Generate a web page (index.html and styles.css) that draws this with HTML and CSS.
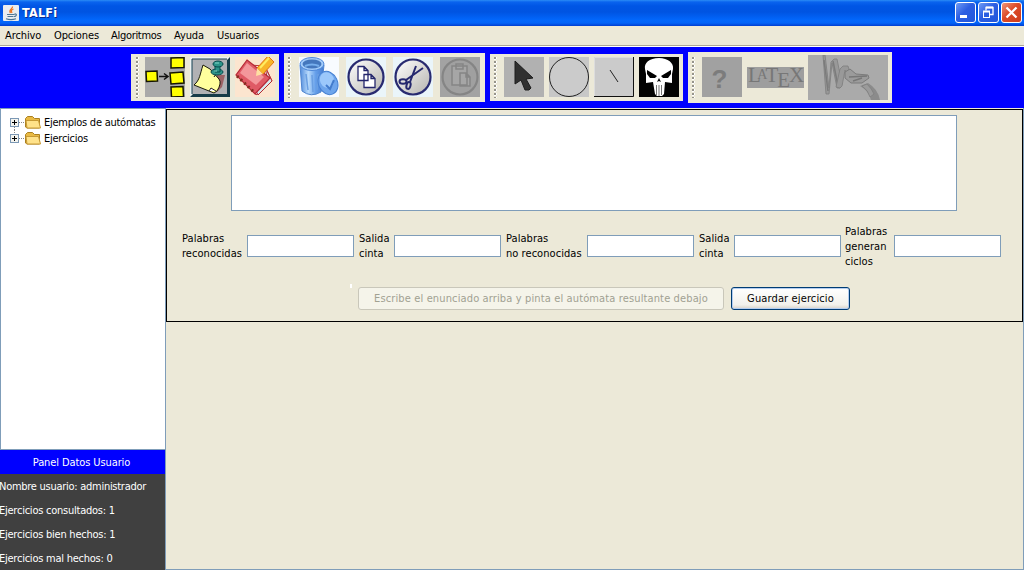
FILE: index.html
```html
<!DOCTYPE html>
<html lang="es">
<head>
<meta charset="utf-8">
<title>TALFi</title>
<link rel="stylesheet" href="styles.css">
</head>
<body>
<header class="titlebar">
  <svg class="app-icon" width="16" height="16" viewBox="0 0 16 16"><rect width="16" height="16" rx="1" fill="#e9edf0"/><path d="M9.5 1.500C10 4 5 4.500 7.500 8M10.500 4C8 5 8 6 9 8" fill="none" stroke="#ec7623" stroke-width="1.300"/><path d="M4 9.500h7.500M4.500 11.500h6M3 13.800c3 1 7 1 10 0M11.500 9c3-.5 2 2.500-.5 2.500" fill="none" stroke="#4d7695" stroke-width="1.200"/></svg>
  <h1 class="title">TALFi</h1>
  <div class="window-buttons">
    <span class="winbtn"><svg width="21" height="21"><rect x="5" y="13" width="7" height="3" fill="#fff"/></svg></span>
    <span class="winbtn"><svg width="21" height="21" fill="none" stroke="#fff"><path d="M8 8.500V5.500h7v7h-3" stroke-width="1.300"/><path d="M8 5.500h7" stroke-width="2"/><rect x="5.500" y="9.500" width="6" height="6"/><path d="M5 9.500h7" stroke-width="2"/></svg></span>
    <span class="winbtn winbtn-close"><svg width="21" height="21"><path d="M5.500 5.500l10 10M15.500 5.500l-10 10" stroke="#fff" stroke-width="2.300"/></svg></span>
  </div>
</header>
<nav class="menubar"><span class="m1">Archivo</span><span class="m2">Opciones</span><span class="m3">Algoritmos</span><span class="m4">Ayuda</span><span class="m5">Usuarios</span></nav>

<div class="toolbars">
  <div class="toolbar tb-files"><i class="grip"></i>
    <svg width="40" height="40" viewBox="0 0 40 40"><rect width="40" height="40" fill="#a9a9a9"/><g fill="#ff0" stroke="#151500" stroke-width="1.500"><path d="M1 14.500l11-.5.500 10-11 .5zM26 1l13-.5v10l-13 .5zM25 16l13-1 1 11-13 1zM26 30l12-.5.500 10-12 .5z"/></g><path d="M14 19.500h9M19 16.500l4 3-4 3" fill="none" stroke="#111" stroke-width="1.500"/></svg>
    <svg width="40" height="40" viewBox="0 0 40 40"><rect width="40" height="40" fill="#163b48"/><path d="M0 40V0h40l-3 3H3v34z" fill="#eef3f3"/><rect x="2" y="2" width="35" height="35" fill="#b1b1b4"/><path d="M2 37V2h35" fill="none" stroke="#174052"/><path d="M27 18l8 0-3 12-5 5z" fill="#9c6265"/><path d="M13 8l7 4 9 10q3 4-2 12l-3 2L4 28c6-5 6-11 9-20z" fill="#ffff9d" stroke="#19190c"/><path d="M19 34l2-3 5 3" fill="#fff" stroke="#222"/><path d="M24 20l4-6" stroke="#111"/><g fill="#2d9388" stroke="#064a4c"><ellipse cx="27" cy="15" rx="6" ry="3"/><path d="M25 8h5v7h-5z"/><ellipse cx="28" cy="7" rx="5" ry="3"/></g><path d="M25 6h4M24 14h3" stroke="#83d5c9"/></svg>
    <svg width="40" height="40" viewBox="0 0 40 40"><rect width="40" height="40" fill="#fce5cf"/><path d="M14 8L30 9l7 15-16 14-7-17z" fill="#fff1ec" stroke="#ba3536"/><path d="M30 10l7 14-14 14-3-6 12-12z" fill="#d7e9ee" stroke="#b42830"/><path d="M12 3l23 18-15 16L1 18z" fill="#df5a65" stroke="#b52836" stroke-width="1.200"/><path d="M12 6l17 14-8 8L5 16z" fill="#f3979b"/><path d="M2 19l18 17" stroke="#852e21" stroke-width="3" stroke-dasharray="2 3"/><path d="M33-1l6 6-11 12-6-6z" fill="#f8b529" stroke="#df7810"/><path d="M22 11l6 6-7 2z" fill="#ffdfa2"/><path d="M34 1l-9 10" stroke="#ffec60" stroke-width="2"/></svg>
  </div>
  <div class="toolbar tb-edit"><i class="grip"></i>
    <svg width="40" height="40" viewBox="0 0 40 40"><defs><linearGradient id="bin"><stop stop-color="#508bdc"/><stop offset=".35" stop-color="#b8dafb"/><stop offset=".65" stop-color="#659fea"/><stop offset="1" stop-color="#457bd0"/></linearGradient></defs><rect width="40" height="40" fill="#f8fbff"/><path d="M1 8l2 26q9 7 19 1l3-27z" fill="url(#bin)" stroke="#4f85cf"/><path d="M7 17l2 16M13 18l1 17M19 17l-1 16" stroke="#6a9fe2" stroke-width="1.500"/><ellipse cx="13" cy="7" rx="12" ry="6.500" fill="#a3ccfa" stroke="#4d87d8"/><ellipse cx="13" cy="7" rx="9.500" ry="4.500" fill="#4477bd"/><path d="M6 9q7-3 14 0" fill="none" stroke="#78b0ed" stroke-width="2"/><ellipse cx="29" cy="26" rx="9.500" ry="12" transform="rotate(-25 29 26)" fill="#6ea5ec" stroke="#4680d2"/><ellipse cx="28" cy="23" rx="7" ry="8" transform="rotate(-25 28 23)" fill="#9cc8fb"/><path d="M27 28l4 4 4-9" fill="none" stroke="#437ccd" stroke-width="2"/></svg>
    <svg width="40" height="40" viewBox="0 0 40 40"><defs><linearGradient id="disc" x2="1" y2="1"><stop stop-color="#fff"/><stop offset="1" stop-color="#b5b3ae"/></linearGradient></defs><rect width="40" height="40" fill="#eaf5fa"/><circle cx="20" cy="20" r="17.500" fill="url(#disc)" stroke="#282a70" stroke-width="2.200"/><g fill="#fff" stroke="#24266c" stroke-width="1.300"><path d="M12 9.500h6l4 4v10H12zM18 9.500v4h4M18 17.500h7l4 4v9H18zM25 17.500v4h4"/></g></svg>
    <svg width="40" height="40" viewBox="0 0 40 40"><rect width="40" height="40" fill="#eaf5fa"/><circle cx="20" cy="20" r="17.500" fill="url(#disc)" stroke="#282a70" stroke-width="2.200"/><g fill="none" stroke="#25286e" stroke-width="2"><path d="M23 9l-6 16M30 11L13 23"/><ellipse cx="10" cy="24.500" rx="3.500" ry="2.300"/><ellipse cx="15.500" cy="28.500" rx="2" ry="3.500" transform="rotate(15 15.500 28.500)"/></g></svg>
    <svg width="40" height="40" viewBox="0 0 40 40"><rect width="40" height="40" fill="#a3a3a3"/><circle cx="20" cy="20" r="17.500" fill="#a0a0a0" stroke="#858585" stroke-width="2.200"/><g fill="#a6a6a6" stroke="#858585" stroke-width="1.500"><path d="M12 9h15v19H12zM16 7h7v5h-7zM20 16h6l4 4v9H20zM26 16v4h4"/></g></svg>
  </div>
  <div class="toolbar tb-draw"><i class="grip"></i>
    <svg width="40" height="40" viewBox="0 0 40 40"><rect width="40" height="40" fill="#b1b1b1"/><path d="M11 4l18 17-7 1 5 9-2 2h-4l-4-10-6 4z" fill="#303030" stroke="#1c1c1c"/></svg>
    <svg width="40" height="40" viewBox="0 0 40 40"><rect width="40" height="40" fill="#c7c7c7"/><circle cx="20" cy="20" r="19.500" fill="#cbcbcb" stroke="#222"/></svg>
    <svg width="40" height="40" viewBox="0 0 40 40"><rect width="40" height="40" fill="#cbcbcb"/><path d="M.5 39V.5H39" fill="none" stroke="#ddd"/><path d="M39.500 0v39.500H0" fill="none" stroke="#111"/><path d="M16 13l8 12" stroke="#222"/></svg>
    <svg width="40" height="40" viewBox="0 0 40 40"><rect width="40" height="40" fill="#030303"/><path d="M20 1C10 1 5 6 6 12l1 5v9l7-1 2 12 2 2h5l2-2 1-12 7 1v-9l1-5C35 6 29 1 20 1z" fill="#fff"/><path d="M8 13l10 6-2 2-5 0-3-4zM32 13l-10 6 2 2 5 0 3-4zM20 21l-2 4 2-1 2 1z"/><path d="M17.500 28v10M20 28v11M22.500 28v10" stroke="#777"/></svg>
  </div>
  <div class="toolbar tb-help"><i class="grip"></i>
    <svg width="40" height="40" viewBox="0 0 40 40"><rect width="40" height="40" fill="#a1a1a1"/><text x="9.500" y="31" class="question">?</text></svg>
    <svg class="latex" width="57" height="21" viewBox="0 0 57 21"><rect width="57" height="21" fill="#9e9e9e"/><text x="1" y="15" class="tex">L<tspan class="tex-a" dx="-3.500" dy="-3">A</tspan><tspan dx="-2" dy="3">T</tspan><tspan dx="-1" dy="5">E</tspan><tspan dx="-1" dy="-5">X</tspan></text></svg>
    <svg class="scribble" width="80" height="45" viewBox="0 0 80 45"><rect width="80" height="45" fill="#aaa"/><path d="M15 0h2l4 33 2-26 3-3h3l5 25-2 4h-3l-5-25-3 31h-3z" fill="#999" stroke="#7d7d7d" stroke-width=".8"/><path d="M16 5l4 31M25 6l5 25" stroke="#7b7b7b" stroke-width="1.500"/><path d="M28 32l4-18 3-3h5l2 7-3 1-2-4-3 16-2 2z" fill="#999" stroke="#7d7d7d" stroke-width=".8"/><path d="M37 17l5-3 6 5 12 1 1 3-7 5H43l-6-5z" fill="#9b9b9b" stroke="#7b7b7b"/><path d="M41 22l18-1M45 26l9-3" stroke="#777" stroke-width="1.500"/><path d="M52 31l8-3q10 6 12 17h-9q-2-9-11-14z" fill="#8b8b8b"/><path d="M54 31l5-2q5 5 7 10l-4 3q-2-7-8-11z" fill="#9b9b9b" stroke="#7d7d7d" stroke-width=".7"/></svg>
  </div>
</div>

<div class="workspace">
  <aside class="sidebar">
    <div class="tree">
      <div class="tree-item"><svg class="node" width="35" height="16" viewBox="0 0 35 16"><path d="M9 8.500h6M4.500 13v3" stroke="#888" stroke-dasharray="1 1"/><rect x=".5" y="4.500" width="8" height="8" fill="#f4f4ef" stroke="#7b98b5"/><path d="M2 8.500h5M4.500 6v5" stroke="#000"/><path d="M15.500 13V4.500l2-2h5l2 2h5V14H17z" fill="#e9ba44" stroke="#ab8020"/><path d="M16 6.500h12.500l2 7.500H17z" fill="#ffe28a" stroke="#c79a35"/></svg><span class="t1">Ejemplos de autómatas</span></div>
      <div class="tree-item"><svg class="node" width="35" height="16" viewBox="0 0 35 16"><path d="M9 8.500h6M4.500 0v4" stroke="#888" stroke-dasharray="1 1"/><rect x=".5" y="4.500" width="8" height="8" fill="#f4f4ef" stroke="#7b98b5"/><path d="M2 8.500h5M4.500 6v5" stroke="#000"/><path d="M15.500 13V4.500l2-2h5l2 2h5V14H17z" fill="#e9ba44" stroke="#ab8020"/><path d="M16 6.500h12.500l2 7.500H17z" fill="#ffe28a" stroke="#c79a35"/></svg><span class="t2">Ejercicios</span></div>
    </div>
    <div class="user-heading">Panel Datos Usuario</div>
    <div class="user-data"><p>Nombre usuario: administrador</p><p class="stat">Ejercicios consultados: 1</p><p class="stat">Ejercicios bien hechos: 1</p><p class="stat">Ejercicios mal hechos: 0</p></div>
  </aside>
  <main class="content">
    <section class="exercise">
      <textarea class="statement"></textarea>
      <div class="fields">
        <label>Palabras<br>reconocidas</label><input>
        <label>Salida<br>cinta</label><input>
        <label>Palabras<br>no reconocidas</label><input>
        <label>Salida<br>cinta</label><input>
        <label>Palabras<br>generan<br>ciclos</label><input>
      </div>
      <div class="actions"><i class="tick"></i><button class="btn btn-hint" disabled>Escribe el enunciado arriba y pinta el autómata resultante debajo</button><button class="btn btn-save">Guardar ejercicio</button></div>
    </section>
  </main>
</div>
</body>
</html>
```
FILE: styles.css
```css
* { box-sizing: border-box; }
body { margin: 0; width: 1024px; height: 570px; overflow: hidden; display: flex; flex-direction: column; background: #ece9d8; color: #000; font: 11px/15px Tahoma, "DejaVu Sans Condensed", sans-serif; letter-spacing: -0.25px; }
svg { display: block; flex: none; }
.titlebar { height: 26px; flex: none; display: flex; align-items: center; padding: 0 2px 1px 3px; background: linear-gradient(#2b8cf5 0, #0a63ee 2px, #0055e5 6px, #0054e2 12px, #0267fc 20px, #0364f8 23px, #003dd0 26px); }
.title { flex: 1; margin: 1px 0 0 3px; color: #fff; font: bold 12.5px/16px "DejaVu Sans Condensed", sans-serif; letter-spacing: 0.25px; text-shadow: 1px 1px #0b2e91; }
.window-buttons { display: flex; gap: 2px; }
.winbtn { width: 21px; height: 21px; border: 1px solid #fff; border-radius: 3px; background: linear-gradient(135deg, #6e9bf5, #2c5ee2 45%, #2157db); }
.winbtn svg { margin: -1px; }
.winbtn-close { background: linear-gradient(135deg, #ef967b, #dc4b27 45%, #cd3d1d); }
.menubar { height: 21px; flex: none; display: flex; padding: 2px 5px; border-bottom: 1px solid #fff; box-shadow: inset 0 -1px #aca899; white-space: nowrap; letter-spacing: -0.1px; }
.m1 { width: 49px; } .m2 { width: 57px; } .m3 { width: 63px; letter-spacing: -0.3px; } .m4 { width: 43px; }
.toolbars { height: 61px; flex: none; display: flex; align-items: center; background: #00f; padding-left: 131px; }
.toolbar { display: flex; align-items: center; background: #ece9d8; }
.toolbar svg { position: relative; top: -0.5px; }
.grip { width: 3px; height: 41px; flex: none; background: radial-gradient(circle at 1px 1px, #96948b 0 1px, #fff 1px 1.600px, transparent 1.700px) 0 0 / 3px 4px; }
.tb-files { width: 148px; height: 47px; padding-left: 5px; gap: 5px; margin-right: 5px; }
.tb-files .grip { margin-right: 1px; }
.tb-edit { width: 201px; height: 49px; padding-left: 4px; gap: 7px; margin-right: 5px; }
.tb-edit .grip { margin-right: 1px; }
.tb-draw { width: 193px; height: 47px; padding-left: 4px; gap: 5px; margin-right: 5px; }
.tb-draw .grip { margin-right: 2px; }
.tb-help { width: 204px; height: 51px; padding-left: 4px; gap: 5px; }
.tb-help .grip { margin-right: 2px; }
.toolbar .scribble { margin-left: -1px; top: 0; }
.question { font: bold 26px "Liberation Sans", sans-serif; fill: #7c7c7c; }
.tex { font: 21px/1 "Liberation Serif", serif; fill: #777; letter-spacing: 0; }
.tex-a { font-size: 14px; }
.workspace { flex: 1; min-height: 0; display: flex; }
.sidebar { width: 166px; flex: none; display: flex; flex-direction: column; border-right: 1px solid #7f9db9; }
.tree { height: 342px; flex: none; border: 1px solid #7f9db9; border-right: 0; background: #fff; padding: 5px 0 0 9px; }
.tree-item { display: flex; height: 16px; align-items: center; white-space: nowrap; }
.node { margin-right: -1px; }
.user-heading { height: 24px; flex: none; background: #00f; color: #fff; text-align: center; line-height: 25px; padding-right: 2px; letter-spacing: -0.1px; }
.user-data { flex: 1; background: #404040; color: #fff; }
.user-data p { margin: 0 0 0 -1px; height: 24px; line-height: 25px; white-space: nowrap; letter-spacing: -0.27px; }
.user-data .stat { letter-spacing: -0.24px; }
.content { flex: 1; min-width: 0; padding-top: 1px; border-right: 1px solid #7f9db9; border-bottom: 1px solid #7f9db9; }
.exercise { height: 213px; border: 1px solid #000; display: flex; flex-direction: column; padding-top: 5px; }
.statement { width: 726px; height: 96px; flex: none; margin: 0 0 0 64px; border: 1px solid #7f9db9; background: #fff; resize: none; outline: none; }
.fields { height: 70px; display: grid; grid-template-columns: 66px 107px 40px 107px 86px 107px 40px 107px 53px 107px; align-items: center; margin-left: 14px; letter-spacing: 0.05px; }
.fields label { padding-left: 5px; white-space: nowrap; }
.fields label:first-child { padding-left: 1px; }
.fields label:last-of-type { padding-left: 4px; }
.fields input { width: 107px; height: 22px; padding: 0; border: 1px solid #7f9db9; background: #fff; }
.actions { display: flex; margin: 6px 0 0 183px; }
.tick { width: 2px; height: 4px; margin: -3px 6px 0 0; background: #fff; }
.btn { height: 23px; padding: 0; border-radius: 3px; font: inherit; letter-spacing: 0.13px; white-space: nowrap; }
.btn-hint { width: 366px; margin-right: 7px; border: 1px solid #c9c7ba; background: #f5f4ea; color: #a1a192; }
.btn-save { width: 119px; border: 1px solid #003c74; background: linear-gradient(#fff, #f2f1ec 80%, #d8d2c8); color: #000; box-shadow: inset 0 0 0 1px #b4cdf0; }
```
